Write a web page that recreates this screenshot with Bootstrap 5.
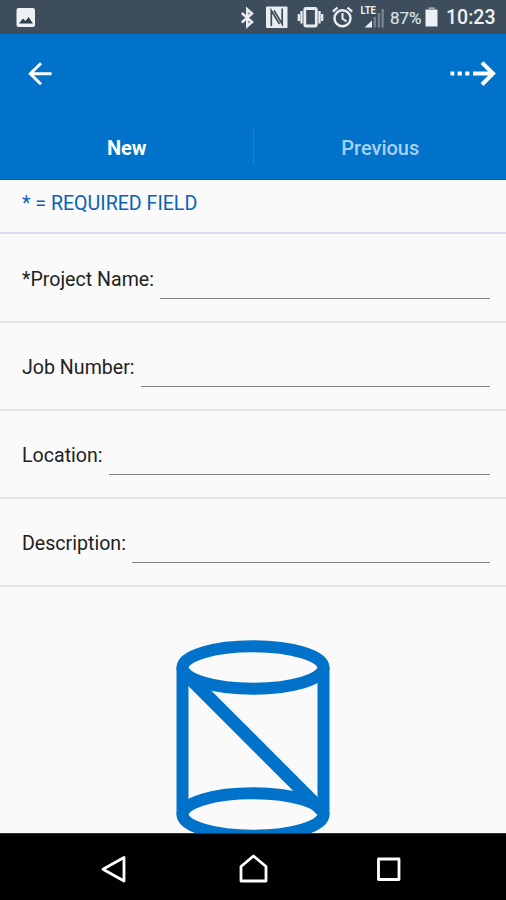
<!DOCTYPE html>
<html lang="en">
<head>
<meta charset="utf-8">
<meta name="viewport" content="width=device-width, initial-scale=1">
<title>New Project</title>
<link href="https://cdn.jsdelivr.net/npm/bootstrap@5.3.0/dist/css/bootstrap.min.css" rel="stylesheet">
<style>
  body { font-family: Roboto, "Noto Sans", sans-serif; background: #fafafa; color: #222; }
  svg { display: block; flex: none; }
  .screen { width: 506px; height: 900px; }
  .statusbar { height: 34px; background: #3d4d5c; color: #eef1f4; padding: 0 10px 0 15px; }
  .battery-pct { font-size: 17px; width: 35px; padding-left: 1px; line-height: 34px; padding-top: 2px; color: #dbe0e5; -webkit-text-stroke: .2px; }
  .clock { font-size: 19.5px; width: 50px; font-weight: 500; line-height: 34px; padding-top: 2px; }
  .appbar { height: 146px; background: #0072c9; border-bottom: 1px solid #0560b4; }
  .toolbar-row { height: 80px; padding: 0 10px 0 27px; }
  .tabs-row { height: 65px; }
  .tab-link { font-size: 20px; font-weight: 500; color: #a9d0f3; text-decoration: none; line-height: 65px; padding: 3px 0 0 1px; }
  .tab-link.active { color: #fff; font-weight: 700; }
  .tab-rule { width: 1px; height: 35px; background: #1e83d2; }
  .required-note { height: 54px; padding: 9px 22px 0; font-size: 19.6px; line-height: 30px; color: #0b62b5; border-bottom: 2px solid #d9dcea; }
  .field-row { height: 88px; padding: 0 16px 0 22px; border-bottom: 2px solid #e4e4e4; }
  .field-list { padding-top: 1px; }
  .field-row label { font-size: 19.6px; line-height: 30px; padding-top: 3px; white-space: nowrap; }
  .field-row .form-control { height: 42px; margin-top: 22px; padding: 0; background: transparent; border: 0; border-bottom: 1.5px solid #858585; border-radius: 0; box-shadow: none; }
  .w-name { width: 138px; } .w-job { width: 119px; } .w-loc { width: 87px; } .w-desc { width: 110px; }
  .drawing { min-height: 0; padding-top: 53px; }
  .navkeys { height: 67px; background: #000; border-top: 1px solid #333; }
</style>
</head>
<body>
<div class="screen d-flex flex-column overflow-hidden">
  <div class="statusbar d-flex align-items-center flex-shrink-0">
    <svg width="22" height="34" viewBox="15 0 22 34"><rect x="16.500" y="8" width="18.500" height="19" rx="2" fill="#eef1f4"/><path d="M19 23.500l4-5 2.500 2.500 3-4 4.500 6.500z" fill="#2f4150"/></svg>
    <svg class="ms-auto" width="154" height="34" viewBox="235 0 154 34" fill="none" stroke="#e9edf1">
      <path d="M241.800 13l10.200 9-4.700 4.200V9.300l4.700 4.200-10.200 9" stroke-width="2.500"/>
      <rect x="266" y="6.500" width="21.500" height="21.500" rx="1" fill="#e9edf1" stroke="none"/>
      <path d="M271.300 26V10.500l8.200 13.500M282.200 8.500V24l-8.200-13.500" stroke="#3d4d5c" stroke-width="1.700"/>
      <rect x="304.800" y="8.500" width="11.500" height="17.500" rx="1" stroke-width="2.800"/>
      <path d="M301.500 11v12.500M298.800 14v7M319.500 11v12.500M322.200 14v7" stroke-width="2.300"/>
      <circle cx="342.500" cy="18.200" r="8" stroke-width="2.400"/>
      <path d="M342.500 13v5.800l4 2.600" stroke-width="2"/><path d="M332.800 11.600l4.700-4M352.200 11.600l-4.700-4" stroke-width="2.200"/>
      <text x="360.500" y="14" font-size="11.500" font-weight="700" textLength="15.500" lengthAdjust="spacingAndGlyphs" fill="#e9edf1" stroke="none">LTE</text>
      <path d="M364.500 27.500l7.500-7v7z" fill="#e9edf1" stroke="none"/>
      <path d="M374.800 27.500V17M378.900 27.500V13M382.700 27.500V9" stroke="#74818c" stroke-width="2.400"/>
    </svg>
    <span class="battery-pct ms-0">87%</span>
    <svg width="22" height="34" viewBox="425 0 22 34" fill="#eef1f4"><path d="M426.500 9.500h12v17h-12z"/><path d="M429.500 7.300h6.500v2.400h-6.500z" fill="#97a1aa"/></svg>
    <span class="clock">10:23</span>
  </div>

  <header class="appbar flex-shrink-0">
    <div class="toolbar-row d-flex align-items-center justify-content-between">
      <svg width="26" height="28" viewBox="27 60 26 28" fill="none" stroke="#fff" stroke-width="3"><path d="M51.500 73.700H30.500M41 63.200L30.300 73.700 41 84.200"/></svg>
      <svg width="48" height="28" viewBox="448 60 48 28" fill="none" stroke="#fff"><path d="M450.500 73.600h3.800M457.600 73.600h4.200M465.200 73.600h4.200M473 73.600h19" stroke-width="4"/><path d="M482 62.700l11 10.900-11 10.900" stroke-width="4"/></svg>
    </div>
    <nav class="tabs-row d-flex align-items-center">
      <a class="tab-link active text-center flex-fill w-50" href="#">New</a>
      <div class="tab-rule"></div>
      <a class="tab-link text-center flex-fill w-50" href="#">Previous</a>
    </nav>
  </header>

  <div class="required-note flex-shrink-0">* = REQUIRED FIELD</div>
  <form class="field-list flex-shrink-0 m-0">
    <div class="field-row d-flex"><label class="w-name flex-shrink-0 align-self-center" for="name">*Project Name:</label><input id="name" class="form-control"></div>
    <div class="field-row d-flex"><label class="w-job flex-shrink-0 align-self-center" for="job">Job Number:</label><input id="job" class="form-control"></div>
    <div class="field-row d-flex"><label class="w-loc flex-shrink-0 align-self-center" for="loc">Location:</label><input id="loc" class="form-control"></div>
    <div class="field-row d-flex"><label class="w-desc flex-shrink-0 align-self-center" for="desc">Description:</label><input id="desc" class="form-control"></div>
  </form>

  <main class="drawing flex-fill overflow-hidden d-flex justify-content-center align-items-start">
    <svg width="154" height="203" viewBox="176 640 154 203" fill="none" stroke="#0072c9" stroke-width="12">
      <ellipse cx="253" cy="667.500" rx="70.500" ry="21.200"/>
      <ellipse cx="253" cy="814.500" rx="70.500" ry="21.200"/>
      <path d="M182.500 667v148M323.500 667v148"/>
      <path d="M184 672.500L322 810.500" stroke-width="13"/>
    </svg>
  </main>

  <footer class="navkeys d-flex justify-content-center align-items-center flex-shrink-0">
    <svg width="304" height="32" viewBox="101 851 304 32" fill="none" stroke="#fff" stroke-width="2.800" stroke-linejoin="round">
      <path d="M124 857.500v23.500L103 869.200z"/>
      <path d="M241 881v-14.500l12.500-10.500L266 866.500V881z"/>
      <rect x="378.500" y="859" width="20.500" height="20.500"/>
    </svg>
  </footer>
</div>
<script src="https://cdn.jsdelivr.net/npm/bootstrap@5.3.0/dist/js/bootstrap.bundle.min.js"></script>
</body>
</html>
